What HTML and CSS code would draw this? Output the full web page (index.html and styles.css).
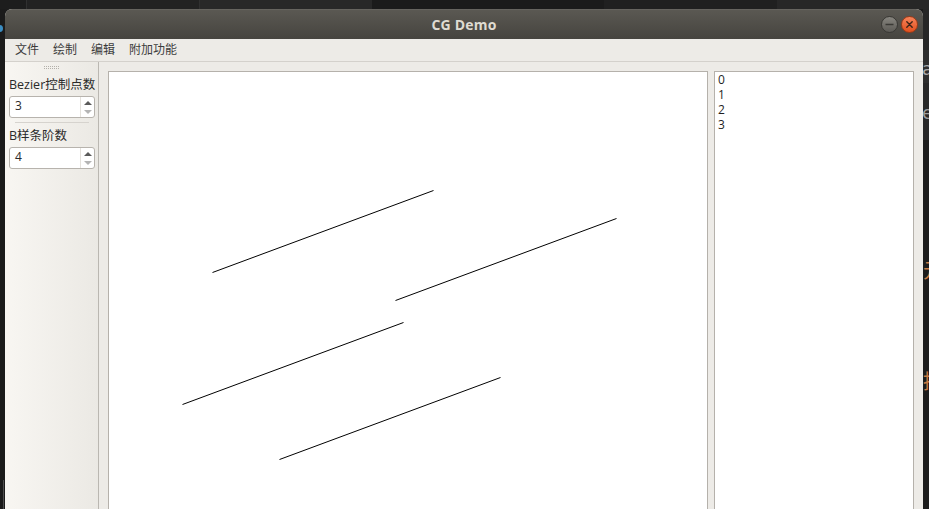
FILE: index.html
```html
<!DOCTYPE html>
<html lang="zh">
<head>
<meta charset="utf-8">
<title>CG Demo</title>
<link rel="stylesheet" href="styles.css">
</head>
<body>
<div class="desktop">
  <div class="top-strip">
    <div class="seg s1"></div><div class="seg s2"></div><div class="seg s3"></div><div class="seg s4"></div><div class="seg s5"></div><div class="seg s6"></div><div class="seg s7"></div><div class="seg s8"></div>
  </div>
  <div class="row">
    <div class="left-strip"><span class="dock-dot"></span><span class="edge-line"></span></div>
    <div class="window">
      <div class="titlebar">
        <span class="title">CG Demo</span>
        <div class="wm-buttons">
          <span class="wm-btn min"><svg width="17" height="17" viewBox="0 0 17 17"><line x1="4.5" y1="8.5" x2="12.5" y2="8.5" stroke="#3a3935" stroke-width="1.3"/></svg></span>
          <span class="wm-btn close"><svg width="17" height="17" viewBox="0 0 17 17"><path d="M5.8 5.8 L11.2 11.2 M11.2 5.8 L5.8 11.2" stroke="#3d2418" stroke-width="1.4" stroke-linecap="round"/></svg></span>
        </div>
      </div>
      <div class="menubar">
        <span class="menu-item">文件</span>
        <span class="menu-item">绘制</span>
        <span class="menu-item">编辑</span>
        <span class="menu-item">附加功能</span>
      </div>
      <div class="main">
        <aside class="dock">
          <div class="handle">
            <svg width="16" height="3" viewBox="0 0 16 3"><g fill="#b3b0aa"><rect x="0" y="0" width="1" height="1"/><rect x="2" y="0" width="1" height="1"/><rect x="4" y="0" width="1" height="1"/><rect x="6" y="0" width="1" height="1"/><rect x="8" y="0" width="1" height="1"/><rect x="10" y="0" width="1" height="1"/><rect x="12" y="0" width="1" height="1"/><rect x="14" y="0" width="1" height="1"/><rect x="0" y="2" width="1" height="1"/><rect x="2" y="2" width="1" height="1"/><rect x="4" y="2" width="1" height="1"/><rect x="6" y="2" width="1" height="1"/><rect x="8" y="2" width="1" height="1"/><rect x="10" y="2" width="1" height="1"/><rect x="12" y="2" width="1" height="1"/><rect x="14" y="2" width="1" height="1"/></g></svg>
          </div>
          <label class="field-label">Bezier控制点数</label>
          <div class="spinbox">
            <span class="value">3</span>
            <span class="arrows">
              <svg width="8" height="4" viewBox="0 0 8 4"><path d="M0 4 L4 0 L8 4 Z" fill="#5a5a5a"/></svg>
              <svg width="8" height="4" viewBox="0 0 8 4"><path d="M0 0 L8 0 L4 4 Z" fill="#b4b4b4"/></svg>
            </span>
          </div>
          <div class="sep"></div>
          <label class="field-label second">B样条阶数</label>
          <div class="spinbox">
            <span class="value">4</span>
            <span class="arrows">
              <svg width="8" height="4" viewBox="0 0 8 4"><path d="M0 4 L4 0 L8 4 Z" fill="#5a5a5a"/></svg>
              <svg width="8" height="4" viewBox="0 0 8 4"><path d="M0 0 L8 0 L4 4 Z" fill="#b4b4b4"/></svg>
            </span>
          </div>
        </aside>
        <div class="central">
          <div class="canvas">
            <svg class="drawing" width="598" height="458" viewBox="0 0 598 458">
              <g stroke="#000" stroke-width="1" fill="none">
                <line x1="103.5" y1="200.5" x2="324.5" y2="118.5"/>
                <line x1="286.5" y1="228.5" x2="507.5" y2="146.5"/>
                <line x1="73.5" y1="332.5" x2="294.5" y2="250.5"/>
                <line x1="170.5" y1="387.5" x2="391.5" y2="305.5"/>
              </g>
            </svg>
          </div>
          <ul class="list">
            <li>0</li>
            <li>1</li>
            <li>2</li>
            <li>3</li>
          </ul>
        </div>
      </div>
    </div>
    <div class="right-strip">
      <span class="band b1"></span>
      <span class="band b2"></span>
      <span class="band b3"></span>
      <span class="bg-glyph g1">a</span>
      <span class="bg-glyph g2">e</span>
      <span class="bg-glyph g3">元</span>
      <span class="bg-glyph g4">持</span>
    </div>
  </div>
</div>
</body>
</html>
```

FILE: styles.css
```css
html, body {
  margin: 0;
  padding: 0;
}

body {
  width: 929px;
  height: 509px;
  overflow: hidden;
  background: #1c1c1c;
  font-family: "Open Sans", "Noto Sans CJK SC", sans-serif;
}

.desktop {
  display: flex;
  flex-direction: column;
  height: 509px;
}

/* desktop background strip above the window */
.top-strip {
  display: flex;
  height: 9px;
  flex: none;
}
.seg { height: 9px; flex: none; }
.s1 { width: 26px; background: #1d1d1d; }
.s2 { width: 1px; background: #303030; }
.s3 { width: 172px; background: #222222; }
.s4 { width: 1px; background: #303030; }
.s5 { width: 172px; background: #282828; }
.s6 { width: 232px; background: #1b1b1b; }
.s7 { width: 173px; background: #202020; }
.s8 { flex: 1; background: #272727; }

.row {
  display: flex;
  flex: 1;
  min-height: 0;
}

.left-strip {
  width: 5px;
  flex: none;
  position: relative;
  background: #1b1b1b;
  overflow: hidden;
}
.dock-dot {
  position: absolute;
  left: -4px;
  top: 16px;
  width: 7px;
  height: 7px;
  border-radius: 50%;
  background: #3b8dc2;
}
.edge-line {
  position: absolute;
  left: 3px;
  top: 471px;
  width: 1px;
  height: 40px;
  background: #4e4e4e;
}

/* application window */
.window {
  width: 918px;
  flex: none;
  display: flex;
  flex-direction: column;
  background: #edebe7;
  border-radius: 7px 7px 0 0;
  overflow: hidden;
}

.titlebar {
  height: 30px;
  flex: none;
  position: relative;
  display: flex;
  align-items: center;
  justify-content: center;
  background: linear-gradient(#5b5953, #46443f);
  box-shadow: inset 0 1px 0 rgba(255, 255, 255, 0.07);
}
.title {
  color: #dfdbd2;
  font-family: "Open Sans", sans-serif;
  font-weight: bold;
  font-size: 14px;
  letter-spacing: 0.2px;
  margin-top: 1px;
}
.wm-buttons {
  position: absolute;
  right: 5px;
  top: 7px;
  display: flex;
  gap: 3px;
}
.wm-btn {
  width: 17px;
  height: 17px;
  border-radius: 50%;
  box-sizing: border-box;
  display: flex;
}
.wm-btn svg { display: block; margin: -1px; }
.wm-btn.min {
  background: linear-gradient(#87857f, #5c5a55);
  border: 1px solid #393834;
}
.wm-btn.close {
  background: linear-gradient(#f6835a, #e1501e);
  border: 1px solid #9c3a17;
}

.menubar {
  height: 22px;
  flex: none;
  display: flex;
  padding-left: 3px;
  border-bottom: 1px solid #d4d1cc;
}
.menu-item {
  padding: 0 7px;
  font-size: 12px;
  line-height: 22px;
  color: #3c3c3c;
}

.main {
  flex: 1;
  display: flex;
  min-height: 0;
}

/* dock widget */
.dock {
  width: 94px;
  flex: none;
  box-sizing: border-box;
  border-right: 1px solid #bab7b1;
  background: linear-gradient(to right, #f8f6f2, #ebe9e4);
  display: flex;
  flex-direction: column;
}
.handle {
  height: 15px;
  box-sizing: border-box;
  padding-top: 4px;
  display: flex;
  justify-content: center;
}
.handle svg { display: block; }

.field-label {
  display: block;
  height: 16px;
  line-height: 16px;
  margin-left: 4px;
  font-size: 12.5px;
  color: #2a2a2a;
  white-space: nowrap;
}
.field-label.second { margin-top: 5px; }

.spinbox {
  margin: 3px 0 0 4px;
  width: 86px;
  height: 22px;
  box-sizing: border-box;
  border: 1px solid #b7b3ad;
  border-radius: 3px;
  background: #fff;
  display: flex;
}
.value {
  flex: 1;
  padding-left: 5px;
  font-size: 12px;
  line-height: 18px;
  color: #2a2a2a;
}
.arrows {
  width: 13px;
  flex: none;
  border-left: 1px solid #e4e1dc;
  display: flex;
  flex-direction: column;
  align-items: center;
  justify-content: center;
  gap: 5px;
}
.arrows svg { display: block; }

.sep {
  margin: 4px 0 0 10px;
  width: 74px;
  height: 1px;
  background: #d6d3ce;
}

/* central area */
.central {
  flex: 1;
  min-width: 0;
  display: flex;
  gap: 6px;
  padding: 9px 9px 0 9px;
}
.canvas {
  width: 600px;
  height: 460px;
  flex: none;
  box-sizing: border-box;
  border: 1px solid #b5b1ab;
  background: #fff;
}
.drawing { display: block; }

.list {
  width: 200px;
  height: 460px;
  flex: none;
  box-sizing: border-box;
  margin: 0;
  padding: 0 3px;
  list-style: none;
  border: 1px solid #b5b1ab;
  background: #fff;
  font-size: 12px;
  line-height: 15px;
  color: #1f1f1f;
}

/* desktop background on the right (other windows behind) */
.right-strip {
  flex: 1;
  position: relative;
  overflow: hidden;
  background: #1c1c1c;
}
.band { position: absolute; left: 0; right: 0; }
.b1 { top: 0; height: 41px; background: #262626; }
.b2 { top: 41px; height: 33px; background: #2e2e2e; }
.b3 { top: 74px; height: 57px; background: #282828; }
.bg-glyph {
  position: absolute;
  left: -1px;
  font-family: "DejaVu Sans", "Noto Sans CJK SC", sans-serif;
  line-height: 1;
}
.g1 { top: 51px; font-size: 18px; color: #a9a9a9; }
.g2 { top: 95px; font-size: 18px; color: #9d9d9d; }
.g3 { top: 252px; left: 0; font-size: 20px; color: #c67a44; }
.g4 { top: 363px; left: 0; font-size: 20px; color: #c67a44; }
```
